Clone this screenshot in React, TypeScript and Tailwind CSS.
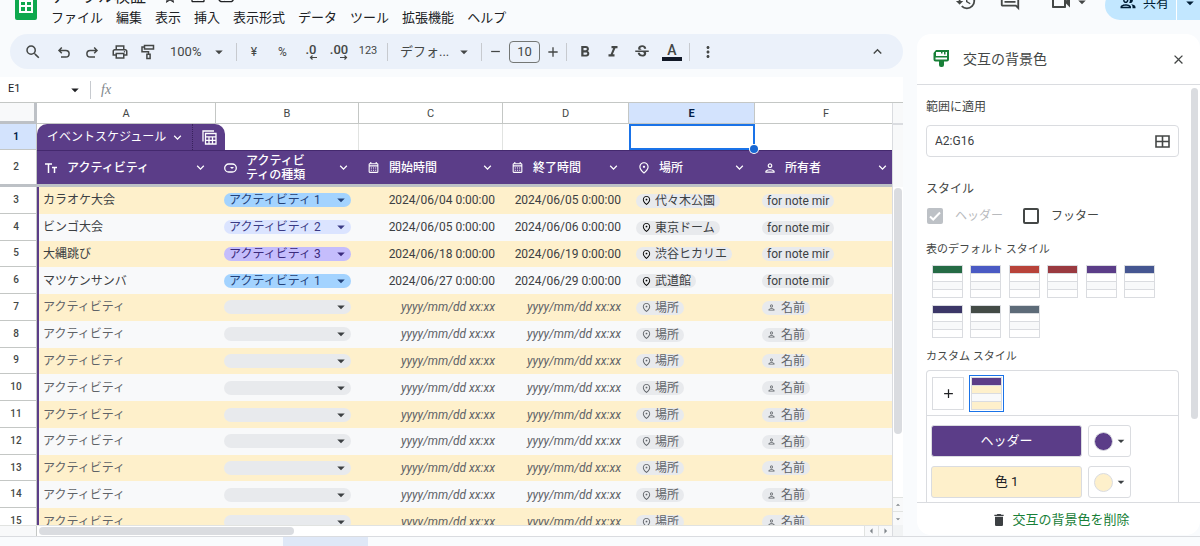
import { ReactNode } from "react";
import clsx from "clsx";
import {
    MdAdd,
    MdArrowDropDown,
    MdArrowDropUp,
    MdArrowLeft,
    MdArrowRight,
    MdClose,
    MdDelete,
    MdFormatBold,
    MdFormatItalic,
    MdHistory,
    MdKeyboardArrowDown,
    MdKeyboardArrowUp,
    MdMoreVert,
    MdOutlineCalendarMonth,
    MdOutlineCloudDone,
    MdOutlineComment,
    MdOutlineDriveFileMove,
    MdOutlinePeople,
    MdOutlinePerson,
    MdOutlinePlace,
    MdOutlinePrint,
    MdOutlineStarBorder,
    MdOutlineVideocam,
    MdRemove,
    MdSearch,
    MdStrikethroughS,
} from "react-icons/md";

const menus = ["ファイル", "編集", "表示", "挿入", "表示形式", "データ", "ツール", "拡張機能", "ヘルプ"];

type Row = {
    name: string;
    kind?: string;
    start?: string;
    end?: string;
    place?: string;
    owner?: string;
};

const empty: Row = { name: "アクティビティ" };

const rows: Row[] = [
    { name: "カラオケ大会", kind: "アクティビティ 1", start: "2024/06/04 0:00:00", end: "2024/06/05 0:00:00", place: "代々木公園", owner: "for note mir" },
    { name: "ビンゴ大会", kind: "アクティビティ 2", start: "2024/06/05 0:00:00", end: "2024/06/06 0:00:00", place: "東京ドーム", owner: "for note mir" },
    { name: "大縄跳び", kind: "アクティビティ 3", start: "2024/06/18 0:00:00", end: "2024/06/19 0:00:00", place: "渋谷ヒカリエ", owner: "for note mir" },
    { name: "マツケンサンバ", kind: "アクティビティ 1", start: "2024/06/27 0:00:00", end: "2024/06/29 0:00:00", place: "武道館", owner: "for note mir" },
    empty, empty, empty, empty, empty, empty, empty, empty, empty,
];

const kindColors: Record<string, string> = {
    "アクティビティ 1": "bg-[#a3d3ff] text-[#23427a]",
    "アクティビティ 2": "bg-[#dbe4ff] text-[#3a3a86]",
    "アクティビティ 3": "bg-[#c5bdfc] text-[#3a2a7c]",
};

const tableStyles = [
    "bg-[#256b45]",
    "bg-[#4a5ac4]",
    "bg-[#b8433a]",
    "bg-[#9a3a40]",
    "bg-[#5b3d88]",
    "bg-[#455691]",
    "bg-[#3c3768]",
    "bg-[#434b46]",
    "bg-[#5d6b78]",
];

const Logo = () => (
    <svg width="22" height="20" viewBox="0 0 22 20" className="shrink-0">
        <path d="M0 0h22v18a2 2 0 0 1-2 2H2a2 2 0 0 1-2-2z" fill="#0fa84e" />
        <path d="M4 0h14v13H4z" fill="#fff" />
        <path d="M6 2h4v3H6zM12 2h4v3h-4zM6 7h4v4H6zM12 7h4v4h-4z" fill="#0fa84e" />
    </svg>
);

const Undo = ({ flip }: { flip?: boolean }) => (
    <svg width="16" height="16" viewBox="0 0 16 16" fill="none" stroke="currentColor" strokeWidth="1.5" className={clsx(flip && "-scale-x-100")}>
        <path d="M5.8 3.5 3 6.4l2.8 2.9M3.2 6.400h6.600a3.300 3.300 0 0 1 0 6.600H5" />
    </svg>
);

const Roller = () => (
    <svg width="16" height="16" viewBox="0 0 16 16" fill="none" stroke="currentColor" strokeWidth="1.5">
        <path d="M4.5 1.5h9V5h-9zM4.5 3H2v4.800h6.500V10M6.900 10.200h3.200v4.300H6.900z" />
    </svg>
);

const Brush = () => (
    <svg width="16" height="18" viewBox="0 0 16 18" fill="#188038">
        <path d="M3 0h13v9.500a2 2 0 0 1-2 2h-3V15a2 2 0 0 1-2 2H8a2 2 0 0 1-2-2v-3.500H2.500a2 2 0 0 1-2-2V3zM3 2v4h11V2h-1.500v2.500H11V2H9.500v1.500H8V2zM2.500 7.500v2H14v-2z" fillRule="evenodd" />
    </svg>
);

const Decimal = ({ digits, right }: { digits: string; right?: boolean }) => (
    <span className="flex flex-col items-end text-[13px] leading-[13px] font-medium">
        {digits}
        <svg width="8" height="5" viewBox="0 0 8 5" fill="none" stroke="currentColor" strokeWidth="1.2" className={clsx("-mt-px", right && "-scale-x-100")}>
            <path d="M8 2.5H1.5M3.5 0.500l-2 2 2 2" />
        </svg>
    </span>
);

const TextType = () => (
    <svg width="12" height="10" viewBox="0 0 12 10" fill="none" stroke="currentColor" strokeWidth="1.5">
        <path d="M0 1h7M3.500 1v9M7 4.500h5M9.500 4.500V10" />
    </svg>
);

const ChipType = () => (
    <svg width="13" height="10" viewBox="0 0 13 10" fill="none" stroke="currentColor" strokeWidth="1.3">
        <rect x="0.7" y="1" width="11.6" height="8" rx="4" />
        <path d="M6 4h4L8 6z" fill="currentColor" stroke="none" />
    </svg>
);

const TableIcon = () => (
    <svg width="15" height="15" viewBox="0 0 15 15" fill="none" stroke="currentColor" strokeWidth="1.3">
        <path d="M1 11.500V1h11" />
        <path d="M3.500 3.500h10.500v10.500H3.500zM3.500 6.800H14M3.500 10.400H14M7 6.800V14M10.500 6.800V14" />
    </svg>
);

const RangeIcon = () => (
    <svg width="15" height="13" viewBox="0 0 15 13" fill="none" stroke="currentColor" strokeWidth="1.6">
        <path d="M1 1h13v11H1zM7.5 1v11M1 6.500h13" />
    </svg>
);

const columns = [
    { icon: <TextType />, label: "アクティビティ" },
    { icon: <ChipType />, label: "アクティビティの種類" },
    { icon: <MdOutlineCalendarMonth size={13} />, label: "開始時間" },
    { icon: <MdOutlineCalendarMonth size={13} />, label: "終了時間" },
    { icon: <MdOutlinePlace size={14} />, label: "場所" },
    { icon: <MdOutlinePerson size={14} />, label: "所有者" },
];

const Tool = ({ label, children, className }: { label: string; children: ReactNode; className?: string }) => (
    <button aria-label={label} className={clsx("flex h-7 shrink-0 items-center justify-center", className ?? "w-7")}>
        {children}
    </button>
);

const Divider = () => <span className="h-[18px] w-px shrink-0 bg-[#c7cacf]" />;

const Header = () => (
    <header className="flex h-[34px] shrink-0 items-start overflow-hidden pl-[15px] text-[#202124]">
        <Logo />
        <div className="ml-[14px] flex flex-col">
            <div className="flex h-[5px] items-end gap-3 overflow-hidden">
                <h1 className="text-[16px] leading-[16px]">テーブル検証</h1>
                <MdOutlineStarBorder size={16} className="ml-1 shrink-0" />
                <MdOutlineDriveFileMove size={16} className="shrink-0" />
                <MdOutlineCloudDone size={16} className="shrink-0" />
            </div>
            <nav className="mt-[3px] flex gap-[13px] text-[13px] leading-5">
                {menus.map((menu) => (
                    <button key={menu} className="whitespace-nowrap">{menu}</button>
                ))}
            </nav>
        </div>
        <div className="-mt-[10px] ml-auto flex shrink-0 items-start text-[#444746]">
            <button aria-label="変更履歴"><MdHistory size={22} /></button>
            <button aria-label="コメント" className="ml-[22px]"><MdOutlineComment size={22} /></button>
            <button aria-label="ビデオ通話" className="ml-7 flex items-center">
                <MdOutlineVideocam size={24} />
                <MdArrowDropDown size={18} />
            </button>
            <div className="ml-[14px] flex h-[30px] overflow-hidden rounded-l-full bg-[#c2e7ff] text-[#001d35]">
                <button className="flex items-center gap-1.5 pb-1 pl-[14px] pr-[7px] text-[13px]">
                    <MdOutlinePeople size={18} />
                    共有
                </button>
                <button aria-label="共有オプション" className="w-6 border-l border-white pb-1 pl-1"><MdArrowDropDown size={18} /></button>
            </div>
        </div>
    </header>
);

const Toolbar = () => (
    <div role="toolbar" className="ml-[10px] flex h-[35px] shrink-0 items-center rounded-full bg-[#ebf1fa] pl-[9px] pr-3 text-[#444746]">
        <Tool label="検索" className="mr-[3px] w-7"><MdSearch size={18} /></Tool>
        <Tool label="元に戻す"><Undo /></Tool>
        <Tool label="やり直し"><Undo flip /></Tool>
        <Tool label="印刷"><MdOutlinePrint size={18} /></Tool>
        <Tool label="書式を貼り付け"><Roller /></Tool>
        <Tool label="ズーム" className="mr-2 ml-2 w-[58px] text-[13px]">
            <span className="flex-1 text-left">100%</span>
            <MdArrowDropDown size={18} className="shrink-0" />
        </Tool>
        <Divider />
        <Tool label="通貨" className="ml-[3px] w-7 text-[12px]">¥</Tool>
        <Tool label="パーセント" className="w-[29px] text-[12px]">%</Tool>
        <Tool label="小数点以下の桁数を減らす"><Decimal digits=".0" /></Tool>
        <Tool label="小数点以下の桁数を増やす" className="w-7"><Decimal digits=".00" right /></Tool>
        <Tool label="表示形式の詳細" className="mr-1 w-[30px] text-[11px]">123</Tool>
        <Divider />
        <Tool label="フォント" className="mr-2 ml-3 w-[73px] text-[13px]">
            <span className="flex-1 text-left">デフォ...</span>
            <MdArrowDropDown size={18} className="shrink-0" />
        </Tool>
        <Divider />
        <Tool label="縮小" className="w-[27px]"><MdRemove size={15} /></Tool>
        <input aria-label="フォントサイズ" defaultValue="10" className="h-[22px] w-[31px] shrink-0 rounded-[4px] border border-[#747775] text-center text-[13px]" />
        <Tool label="拡大" className="w-[26px]"><MdAdd size={16} /></Tool>
        <Divider />
        <Tool label="太字" className="ml-1 w-7"><MdFormatBold size={18} /></Tool>
        <Tool label="斜体"><MdFormatItalic size={18} /></Tool>
        <Tool label="取り消し線" className="w-[30px]"><MdStrikethroughS size={18} /></Tool>
        <Tool label="テキストの色" className="mr-[2px] w-[30px] flex-col">
            <span className="text-[14px] leading-[14px] font-medium">A</span>
            <span className="h-1 w-5 bg-[#111827]" />
        </Tool>
        <Divider />
        <Tool label="その他" className="ml-1 w-7"><MdMoreVert size={18} /></Tool>
        <Tool label="メニューを非表示" className="ml-auto w-7"><MdKeyboardArrowUp size={17} /></Tool>
    </div>
);

const Columns = () => (
    <colgroup>
        <col className="w-[37px]" />
        <col className="w-[179px]" />
        <col className="w-[143px]" />
        <col className="w-[144px]" />
        <col className="w-[126px]" />
        <col className="w-[126px]" />
        <col />
    </colgroup>
);

// the last column runs a little under the vertical scrollbar
const FrozenRows = () => (
    <table className="w-[calc(100%+6px)] table-fixed border-separate border-spacing-0">
        <Columns />
        <thead>
            <tr className="h-[21px] text-[11px] leading-none text-[#444746]">
                <th className="border-r-[3px] border-b-[3px] border-[#bdc1c6] bg-[#f8f9fa]" />
                {["A", "B", "C", "D", "E", "F"].map((letter) => (
                    <th
                        key={letter}
                        className={clsx(
                            "border-r border-b border-[#c4c7c5] p-0",
                            letter === "E" ? "bg-[#d3e3fd] font-bold text-[#041e49]" : "font-normal"
                        )}
                    >
                        {letter}
                    </th>
                ))}
            </tr>
        </thead>
        <tbody>
            <tr className="h-[26px]">
                <th className="border-r border-b border-[#c4c7c5] bg-[#d3e3fd] p-0 pr-1 text-[10px] leading-none font-bold text-[#041e49]">1</th>
                <td className="p-0">
                    <div className="relative z-10 flex h-[26px] w-[188px] items-center rounded-t-[10px] bg-[#5b3d88] text-[12px] text-white">
                        <button className="flex h-full flex-1 items-center justify-between border-r border-dotted border-[#38225c] pr-[7px] pl-[10px] whitespace-nowrap">
                            イベントスケジュール
                            <MdKeyboardArrowDown size={15} />
                        </button>
                        <button aria-label="テーブルの表示" className="flex w-8 justify-center"><TableIcon /></button>
                    </div>
                </td>
                <td className="border-r border-[#e1e3e1]" />
                <td className="border-r border-[#e1e3e1]" />
                <td />
                <td className="p-0">
                    <div className="relative h-[26px] border-2 border-[#1a73e8]">
                        <span className="absolute -right-[5px] -bottom-[5px] z-10 size-2 rounded-full bg-[#1967d2] ring-1 ring-white" />
                    </div>
                </td>
                <td />
            </tr>
            <tr className="h-[34px]">
                <th className="border-r border-[#c4c7c5] p-0 pr-1 text-[10px] leading-none font-medium text-[#444746]">2</th>
                {columns.map(({ icon, label }) => (
                    <th key={label} className="border-t border-[#44296e] bg-[#5b3d88] p-0 text-left text-[12px] leading-[14px] font-medium text-white">
                        <div className="flex items-center pr-2 pl-2">
                            <span className="w-[22px] shrink-0">{icon}</span>
                            <span className={clsx(label.length > 8 ? "w-[62px] [word-break:break-all]" : "whitespace-nowrap")}>{label}</span>
                            <MdKeyboardArrowDown size={15} className="ml-auto shrink-0" />
                        </div>
                    </th>
                ))}
            </tr>
        </tbody>
    </table>
);

const KindChip = ({ kind }: { kind?: string }) => (
    <div className={clsx("relative h-[14px] w-[127px] rounded-full", kind ? kindColors[kind] : "bg-[#e8eaed] text-[#3c4043]")}>
        <select
            aria-label="アクティビティの種類"
            defaultValue={kind ?? ""}
            className="block h-[14px] w-full appearance-none bg-transparent pl-[5px] text-[12px] leading-[14px]"
        >
            <option value="" />
            {Object.keys(kindColors).map((k) => (
                <option key={k}>{k}</option>
            ))}
        </select>
        <MdArrowDropDown size={18} className="pointer-events-none absolute -top-0.5 right-px" />
    </div>
);

const Chip = ({ children, muted }: { children: ReactNode; muted: boolean }) => (
    <span className={clsx("inline-flex h-[14px] items-center rounded-full bg-[#e8eaed] px-[5px] align-middle leading-[14px] whitespace-nowrap", muted ? "text-[#5f6368]" : "text-[#3c4043]")}>
        {children}
    </span>
);

const Sheet = () => (
    <table className="h-[348px] w-[calc(100%+6px)] table-fixed border-separate border-spacing-0 text-[12px] leading-[14px]">
        <Columns />
        <tbody>
            {rows.map((row, i) => {
                const blank = !row.kind;
                return (
                    <tr key={i} className={clsx(i % 2 === 0 ? "bg-[#fef0cb]" : "bg-[#f8f9fa]", blank ? "text-[#5f6368]" : "text-[#3c4043]")}>
                        <th className="border-r border-b border-[#c4c7c5] bg-white p-0 pr-1 text-[10px] leading-none font-medium text-[#444746]">{i + 3}</th>
                        <td className="border-l-2 border-[#5b3d88] p-0 pl-1">{row.name}</td>
                        <td className="p-0 pl-2"><KindChip kind={row.kind} /></td>
                        <td className={clsx("p-0 pr-2 text-right", blank && "italic")}>{row.start ?? "yyyy/mm/dd xx:xx"}</td>
                        <td className={clsx("p-0 pr-2 text-right", blank && "italic")}>{row.end ?? "yyyy/mm/dd xx:xx"}</td>
                        <td className="p-0 pl-[7px]">
                            <Chip muted={blank}>
                                <MdOutlinePlace size={11} className={clsx("mr-[3px] shrink-0", !blank && "text-black")} />
                                {row.place ?? "場所"}
                            </Chip>
                        </td>
                        <td className="p-0 pl-[7px]">
                            <Chip muted={blank}>
                                {blank && <MdOutlinePerson size={9} className="mr-[5px] shrink-0" />}
                                {row.owner ?? "名前"}
                            </Chip>
                        </td>
                    </tr>
                );
            })}
        </tbody>
    </table>
);

const arrow = "flex items-center justify-center border-[#e1e3e1] bg-[#f8f9fa] text-[#80868b]";

const Spreadsheet = () => (
    <main className="flex min-w-0 flex-1 flex-col">
        <Toolbar />
        <div className="mt-2 flex h-[26px] shrink-0 items-center border-b border-[#c4c7c5] bg-white pl-2 text-[12px] text-[#202124]">
            <input aria-label="名前ボックス" defaultValue="E1" className="w-[58px] text-[11px]" />
            <MdArrowDropDown size={18} className="mr-[6px]" />
            <Divider />
            <span className="ml-[10px] font-['Liberation_Serif',serif] text-[14px] text-[#80868b] italic">fx</span>
        </div>
        <div className="flex min-h-0 flex-1 bg-white">
            <div className="flex min-w-0 flex-1 flex-col overflow-hidden">
                <FrozenRows />
                <div className="h-[3px] shrink-0 bg-[#bdc1c6]" />
                <div className="min-h-0 flex-1 overflow-hidden">
                    <Sheet />
                </div>
                <div className="flex h-[11px] shrink-0 border-t border-[#e1e3e1]">
                    <span className="w-[37px] border-r border-[#c4c7c5] bg-[#f8f9fa]" />
                    <span className="mt-px ml-[2px] h-2 w-[255px] rounded-full bg-[#dadce0]" />
                    <button aria-label="左へ" className={clsx(arrow, "ml-auto w-[14px] border-l")}><MdArrowLeft size={14} /></button>
                    <button aria-label="右へ" className={clsx(arrow, "w-[14px] border-l")}><MdArrowRight size={14} /></button>
                </div>
            </div>
            <div className="flex w-[11px] shrink-0 flex-col items-center border-l border-[#dadce0]">
                <span className="h-[22px] w-full shrink-0 border-b-2 border-[#dadce0] bg-[#f8f9fa]" />
                <span className="h-[62px] w-full shrink-0 bg-[#f8f9fa]" />
                <span className="mt-px h-[246px] w-2 shrink-0 rounded-full bg-[#dadce0]" />
                <button aria-label="上へ" className={clsx(arrow, "mt-auto h-[14px] w-full border-t")}><MdArrowDropUp size={12} /></button>
                <button aria-label="下へ" className={clsx(arrow, "h-[14px] w-full border-t")}><MdArrowDropDown size={12} /></button>
                <span className="h-[11px] w-full shrink-0 bg-[#f1f3f4]" />
            </div>
        </div>
    </main>
);

const StyleThumb = ({ header, odd, even, label }: { header: string; odd: string; even: string; label: string }) => (
    <button aria-label={label} className="flex h-[33px] w-[31px] flex-col divide-y divide-[#dadce0] border border-[#dadce0]">
        <span className={clsx("h-2 w-full shrink-0", header)} />
        <span className={clsx("w-full flex-1", odd)} />
        <span className={clsx("w-full flex-1", even)} />
        <span className={clsx("w-full flex-1", odd)} />
    </button>
);

const ColorRow = ({ label, className, dot }: { label: string; className: string; dot: string }) => (
    <div className="flex gap-[6px]">
        <button className={clsx("h-8 w-[151px] rounded-[3px] border border-[#dadce0] text-[13px]", className)}>{label}</button>
        <button aria-label={`${label}の色`} className="flex h-8 w-[43px] items-center justify-center rounded-[3px] border border-[#dadce0] text-[#3c4043]">
            <span className={clsx("ml-1 size-[19px] shrink-0 rounded-full border border-[#dadce0]", dot)} />
            <MdArrowDropDown size={16} className="shrink-0" />
        </button>
    </div>
);

const SidePanel = () => (
    <aside className="mb-px ml-[14px] flex w-[283px] shrink-0 flex-col overflow-hidden rounded-[14px] bg-white text-[12px] text-[#444746]">
        <div className="flex h-[51px] shrink-0 items-center border-b border-[#dadce0] pr-[14px] pl-4">
            <Brush />
            <h2 className="ml-[14px] text-[14px]">交互の背景色</h2>
            <button aria-label="閉じる" className="ml-auto"><MdClose size={15} /></button>
        </div>
        <div className="flex min-h-0 flex-1 overflow-hidden">
            <div className="flex min-w-0 flex-1 flex-col pr-3 pl-[9px] leading-4">
                <label htmlFor="range" className="mt-[14px]">範囲に適用</label>
                <div className="mt-[10px] flex h-8 shrink-0 items-center rounded-[4px] border border-[#dadce0] pr-2 pl-2">
                    <input id="range" defaultValue="A2:G16" className="min-w-0 flex-1 text-[12px] text-[#3c4043]" />
                    <RangeIcon />
                </div>
                <h3 className="mt-6">スタイル</h3>
                <div className="mt-[11px] ml-px flex items-center">
                    <label className="flex items-center gap-3 text-[#b8babd]">
                        <span className="relative flex">
                            <input type="checkbox" defaultChecked disabled className="size-4 appearance-none rounded-[2px] bg-[#bdc1c6]" />
                            <svg width="16" height="16" viewBox="0 0 16 16" fill="none" stroke="#fff" strokeWidth="2" className="pointer-events-none absolute">
                                <path d="M3 8.500l3.200 3L13 4.500" />
                            </svg>
                        </span>
                        ヘッダー
                    </label>
                    <label className="ml-5 flex items-center gap-3">
                        <input type="checkbox" className="size-4 appearance-none rounded-[2px] border-2 border-[#444746]" />
                        フッター
                    </label>
                </div>
                <h3 className="mt-[18px] text-[11px]">表のデフォルト スタイル</h3>
                <div className="mt-[7px] ml-[6px] grid w-[223px] grid-cols-[repeat(6,31px)] justify-between gap-y-[7px]">
                    {tableStyles.map((header, i) => (
                        <StyleThumb key={header} label={`スタイル ${i + 1}`} header={header} odd="bg-white" even="bg-[#f8f9fa]" />
                    ))}
                </div>
                <h3 className="mt-[11px] text-[11px]">カスタム スタイル</h3>
                <div className="mt-[5px] flex grow flex-col rounded-t-[4px] border border-b-0 border-[#dadce0]">
                    <div className="flex h-[45px] shrink-0 items-center gap-[5px] border-b border-[#dadce0] pl-[5px]">
                        <button aria-label="追加" className="flex h-[33px] w-8 items-center justify-center border border-[#dadce0] text-[#202124]"><MdAdd size={15} /></button>
                        <div className="border border-[#1a73e8] p-px">
                            <StyleThumb label="カスタム スタイル 1" header="bg-[#5b3d88]" odd="bg-[#fef0cb]" even="bg-[#f8f9fa]" />
                        </div>
                    </div>
                    <div className="mt-[9px] ml-1 flex flex-col gap-[9px]">
                        <ColorRow label="ヘッダー" className="bg-[#5b3d88] text-white" dot="bg-[#5b3d88]" />
                        <ColorRow label="色 1" className="bg-[#fef0cb] text-[#202124]" dot="bg-[#fef0cb]" />
                    </div>
                </div>
            </div>
            <span className="mt-[3px] mr-[2px] h-[331px] w-[7px] shrink-0 rounded-full bg-[#dadce0]" />
        </div>
        <button className="flex h-[33px] w-full shrink-0 items-center justify-center gap-[5px] border-t border-[#dadce0] pt-px pl-1 text-[13px] text-[#188038]">
            <MdDelete size={16} className="text-[#3c4043]" />
            交互の背景色を削除
        </button>
    </aside>
);

export default function App() {
    return (
        <div className="flex h-screen flex-col overflow-hidden bg-[#f9fbfd] [font-family:Roboto,'Noto_Sans_CJK_JP',sans-serif]">
            <Header />
            <div className="flex min-h-0 flex-1">
                <Spreadsheet />
                <SidePanel />
            </div>
            <footer className="flex h-[10px] shrink-0 border-t border-[#dadce0] pl-[283px]">
                <span className="w-[85px] bg-[#dfe8f7]" />
            </footer>
        </div>
    );
}
